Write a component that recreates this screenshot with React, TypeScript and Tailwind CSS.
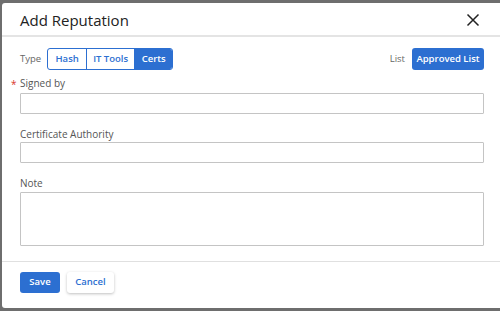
import React from "react";

const App: React.FC = () => {
  return (
    <div className="w-[500px] h-[311px] bg-[#6e6e6e] pl-[2px] pt-[3px] pb-[3px] flex" style={{ fontFamily: '"Open Sans", sans-serif' }}>
      <div className="flex-1 bg-white rounded-l-[3px] flex flex-col">
        <div className="h-[34px] flex items-center justify-between pl-[18px] pr-[20px] pt-[2px] border-b-2 border-[#e4e4e4]">
          <h1 className="text-[15px] text-[#222]">Add Reputation</h1>
          <svg width="14" height="14" viewBox="0 0 14 14" className="text-[#222]">
            <path d="M1.5 1.5 L12.5 12.5 M12.5 1.5 L1.5 12.5" stroke="currentColor" strokeWidth="1.5" />
          </svg>
        </div>

        <div className="flex flex-col pl-[18px] pr-[16px]">
          <div className="flex items-center justify-between mt-[11px]">
            <div className="flex items-center gap-[6px]">
              <span className="text-[9.5px] text-[#666]">Type</span>
              <div className="flex h-[22px] rounded-[3px] border border-[#2c6fd1] overflow-hidden text-[9.5px] font-semibold">
                <button className="w-[39px] text-[#2c6fd1] border-r border-[#2c6fd1]">Hash</button>
                <button className="w-[48px] text-[#2c6fd1] border-r border-[#2c6fd1]">IT Tools</button>
                <button className="w-[37px] bg-[#2c6fd1] text-white">Certs</button>
              </div>
            </div>
            <div className="flex items-center gap-[7px]">
              <span className="text-[9.5px] text-[#666]">List</span>
              <button className="h-[22px] w-[72px] rounded-[3px] bg-[#2c6fd1] text-white text-[9.5px] font-semibold">
                Approved List
              </button>
            </div>
          </div>

          <label className="relative mt-[6px] text-[10px] text-[#555] leading-[14px]">
            <span className="absolute -left-[9px] top-[1px] text-[#d9342b]">*</span>
            Signed by
          </label>
          <input className="mt-[3px] h-[21px] border border-[#c4c4c4] rounded-[1px]" />

          <label className="mt-[13px] text-[10px] text-[#555] leading-[14px]">Certificate Authority</label>
          <input className="mt-[1px] h-[21px] border border-[#c4c4c4] rounded-[1px]" />

          <label className="mt-[13px] text-[10px] text-[#555] leading-[14px]">Note</label>
          <textarea className="mt-[2px] h-[54px] border border-[#c4c4c4] rounded-[1px] resize-none" />
        </div>

        <div className="mt-[15px] border-t border-[#e0e0e0] flex items-center gap-[7px] pl-[18px] pt-[10px]">
          <button className="h-[21px] w-[40px] rounded-[3px] bg-[#2c6fd1] text-white text-[9.5px] font-semibold">Save</button>
          <button className="h-[21px] w-[47px] rounded-[3px] bg-white text-[#2c6fd1] text-[9.5px] font-semibold shadow-[0_1px_3px_rgba(0,0,0,0.25)]">
            Cancel
          </button>
        </div>
      </div>
    </div>
  );
};

export default App;
